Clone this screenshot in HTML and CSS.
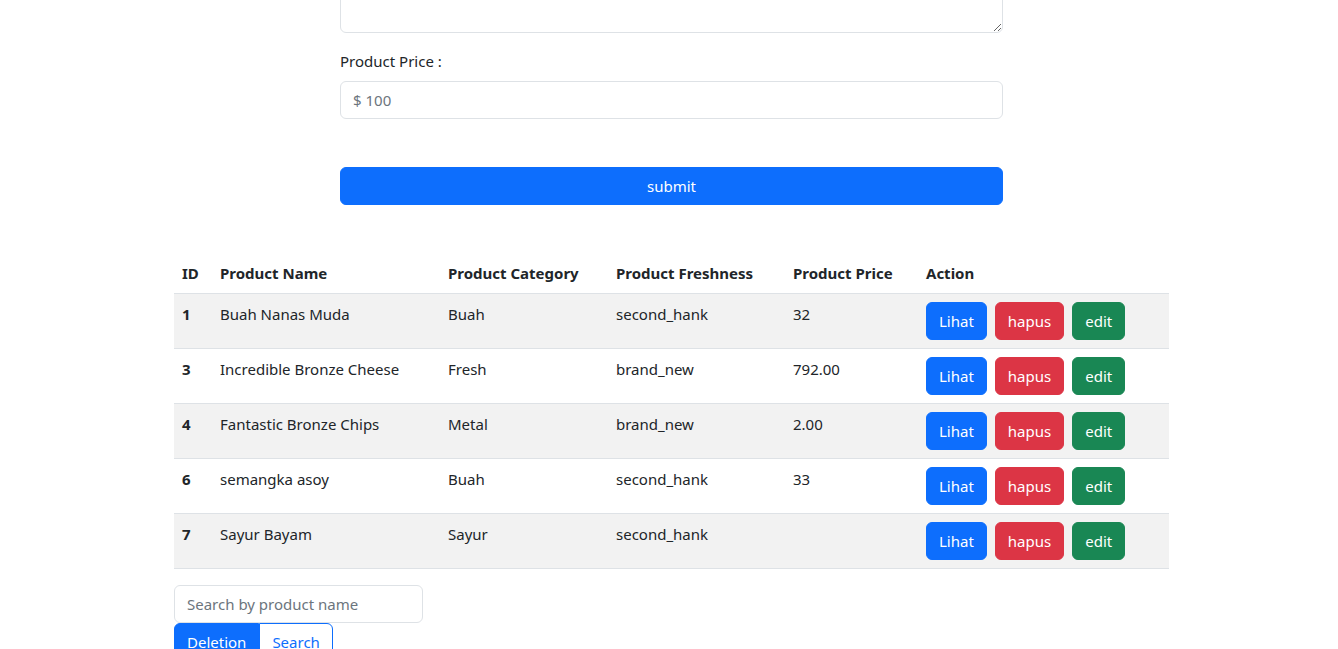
FILE: index.html
```html
<!DOCTYPE html>
<html lang="en">
<head>
<meta charset="utf-8">
<title>Products</title>
<link rel="stylesheet" href="styles.css">
</head>
<body>
<div class="page">
  <form class="product-form">
    <textarea class="form-control textarea"></textarea>
    <label class="form-label">Product Price :</label>
    <input class="form-control" type="text" placeholder="$ 100">
    <button type="button" class="btn btn-primary btn-block">submit</button>
  </form>

  <div class="table-wrap">
    <table class="table">
      <colgroup>
        <col class="c-id"><col class="c-name"><col class="c-cat"><col class="c-fresh"><col class="c-price"><col class="c-action">
      </colgroup>
      <thead>
        <tr><th>ID</th><th>Product Name</th><th>Product Category</th><th>Product Freshness</th><th>Product Price</th><th>Action</th></tr>
      </thead>
      <tbody>
        <tr class="odd"><th>1</th><td>Buah Nanas Muda</td><td>Buah</td><td>second_hank</td><td>32</td><td><div class="actions"><button class="btn btn-primary">Lihat</button><button class="btn btn-danger">hapus</button><button class="btn btn-success">edit</button></div></td></tr>
        <tr><th>3</th><td>Incredible Bronze Cheese</td><td>Fresh</td><td>brand_new</td><td>792.00</td><td><div class="actions"><button class="btn btn-primary">Lihat</button><button class="btn btn-danger">hapus</button><button class="btn btn-success">edit</button></div></td></tr>
        <tr class="odd"><th>4</th><td>Fantastic Bronze Chips</td><td>Metal</td><td>brand_new</td><td>2.00</td><td><div class="actions"><button class="btn btn-primary">Lihat</button><button class="btn btn-danger">hapus</button><button class="btn btn-success">edit</button></div></td></tr>
        <tr><th>6</th><td>semangka asoy</td><td>Buah</td><td>second_hank</td><td>33</td><td><div class="actions"><button class="btn btn-primary">Lihat</button><button class="btn btn-danger">hapus</button><button class="btn btn-success">edit</button></div></td></tr>
        <tr class="odd"><th>7</th><td>Sayur Bayam</td><td>Sayur</td><td>second_hank</td><td></td><td><div class="actions"><button class="btn btn-primary">Lihat</button><button class="btn btn-danger">hapus</button><button class="btn btn-success">edit</button></div></td></tr>
      </tbody>
    </table>

    <div class="search">
      <input class="form-control search-input" type="text" placeholder="Search by product name">
      <div class="search-buttons">
        <button class="btn btn-primary">Deletion</button><button class="btn btn-outline">Search</button>
      </div>
    </div>
  </div>
</div>
</body>
</html>
```
FILE: styles.css
```css
* { box-sizing: border-box; }
html, body { margin: 0; padding: 0; }
body {
  font-family: "Noto Sans", "Open Sans", sans-serif;
  font-size: 15px;
  line-height: 24px;
  color: #212529;
  background: #fff;
  overflow: hidden;
}
.page {
  padding-left: 5px;
  display: flex;
  flex-direction: column;
  align-items: center;
}
.product-form {
  width: 663px;
  display: flex;
  flex-direction: column;
  margin-top: -50px;
}
.form-control {
  display: block;
  width: 100%;
  height: 38px;
  padding: 6px 12px;
  font: inherit;
  color: #212529;
  background: #fff;
  border: 1px solid #dee2e6;
  border-radius: 6px;
  outline: none;
}
.form-control::placeholder { color: #6c757d; }
.textarea { height: 83px; resize: vertical; }
.form-label { margin-top: 16px; margin-bottom: 8px; display: block; }
.btn {
  display: inline-block;
  font: inherit;
  padding: 6px 12px;
  height: 38px;
  border: 1px solid transparent;
  border-radius: 6px;
  color: #fff;
  cursor: pointer;
  white-space: nowrap;
}
.btn-primary { background: #0d6efd; border-color: #0d6efd; }
.btn-danger { background: #dc3545; border-color: #dc3545; }
.btn-success { background: #198754; border-color: #198754; }
.btn-outline { background: #fff; color: #0d6efd; border-color: #0d6efd; }
.btn-block { width: 100%; margin-top: 48px; }
.table-wrap { width: 995px; margin-top: 48px; }
.table {
  width: 995px;
  border-collapse: collapse;
  table-layout: fixed;
  margin-bottom: 16px;
}
.c-id { width: 38px; }
.c-name { width: 228px; }
.c-cat { width: 168px; }
.c-fresh { width: 177px; }
.c-price { width: 133px; }
.c-action { width: 251px; }
.table th, .table td {
  padding: 8px;
  text-align: left;
  vertical-align: top;
  border-bottom: 1px solid #dee2e6;
}
.table th { font-weight: 700; }
.table tr.odd > * { background: #f2f2f2; }
.actions { display: flex; gap: 8px; }
.search { display: flex; flex-direction: column; align-items: flex-start; }
.search-input { width: 249px; }
.search-buttons { display: flex; }
.search-buttons .btn-primary { border-radius: 6px 0 0 6px; }
.search-buttons .btn-outline { border-radius: 0 6px 6px 0; }
```
